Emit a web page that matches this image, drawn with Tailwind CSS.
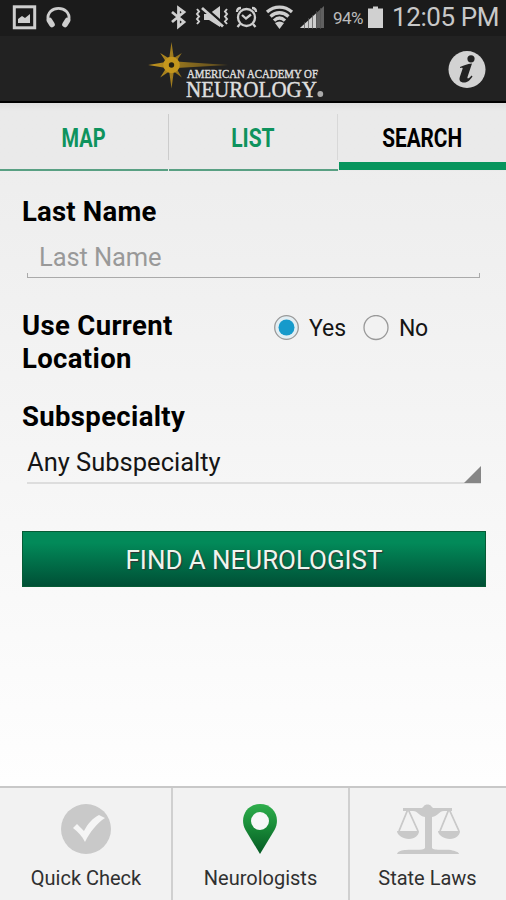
<!DOCTYPE html>
<html lang="en">
<head>
<meta charset="utf-8">
<title>American Academy of Neurology</title>
<script src="https://cdn.jsdelivr.net/npm/@tailwindcss/browser@4"></script>
</head>
<body class="w-[506px] h-[900px] overflow-hidden font-[Roboto,sans-serif] text-black">
<div class="flex flex-col w-[506px] h-[900px] bg-linear-to-b from-[#e9e9e9] to-[#fefefe] to-[87%]">
  <!-- Status bar -->
  <div class="h-9 shrink-0 bg-[#1b1b1b] flex">
    <svg class="w-[330px] h-9 shrink-0" viewBox="0 0 330 36" fill="none" stroke="#cecece">
      <rect x="14.300" y="6.800" width="20.400" height="21" stroke-width="3"/>
      <path d="M18 23v-4l4-3 3 2 5-4v9z" fill="#cecece" stroke="none"/>
      <path d="M48 20c-2-15.500 23-15.500 21 0" stroke-width="2.800"/>
      <path d="M49.500 20.500l2.500 4M67.500 20.500l-2.500 4" stroke-width="5.600" stroke-linecap="round"/>
      <path d="M172 12l12 10-5.500 4.500V8l5.500 4-12 10" stroke-width="2.800"/>
      <path d="M204 14h5l11-8v21l-11-7h-5z" fill="#cecece" stroke="none"/>
      <path d="M203 6l22 19" stroke="#1b1b1b" stroke-width="2.500"/>
      <path d="M202 8l21 18.500" stroke-width="2.800"/>
      <path d="M197 9l2 2.500-2 2.500 2 2.500-2 2.500 2 2.500-2 2.500M227 9l-2 2.500 2 2.500-2 2.500 2 2.500-2 2.500 2 2.500" stroke-width="2"/>
      <circle cx="246.500" cy="17.500" r="8.500" stroke-width="2.300"/>
      <path d="M242 15l4 3.500 5-4M240 24l-2.500 3M253 24l2.500 3M237 12c0-3 2-4 4-4M256 12c0-3-2-4-4-4" stroke-width="2.300"/>
      <path d="M267 12c7.500-6.500 17.500-6.500 25 0M270.500 16.500c5.500-5 12.500-5 18 0M274 20.700c3.500-3.500 7.500-3.500 11 0" stroke-width="3.300"/>
      <path d="M275 23c3-2 6-2 9 0l-4.500 6z" fill="#cecece" stroke="none"/>
      <path d="M300 28L324 6v22z" fill="#606060" stroke="none"/>
      <path d="M300 28L316 13.500V28z" fill="#cecece" stroke="none"/>
      <path d="M304.500 22v7M308.500 18v11M312.500 15v14M316.500 11v18M320.500 8v21" stroke="#505050" stroke-width=".7"/>
    </svg>
    <span class="w-[37px] shrink-0 text-[17px] leading-9 pl-[3px] text-[#bcbcbc] tracking-[-.6px] whitespace-nowrap">94%</span>
    <svg class="w-5 h-9 shrink-0" viewBox="0 0 20 36"><path d="M1 8.500h5V6.500h5v2h5V28H1z" fill="#d0d0d0"/></svg>
    <span class="pl-[5px] text-[26px] leading-[35px] text-[#c8c8c8] whitespace-nowrap tracking-[-.4px]">12:05 PM</span>
  </div>
  <!-- Brand header -->
  <header class="h-[67px] shrink-0 bg-[#222] border-b-2 border-black flex items-start justify-between">
    <svg class="w-[190px] h-[65px] ml-[145px]" viewBox="145 36 190 65">
      <defs>
        <linearGradient id="ray"><stop stop-color="#c5971e"/><stop offset="1" stop-color="#7e621c" stop-opacity=".6"/></linearGradient>
      </defs>
      <path d="M171.500 42l2.300 16 8-5-5.500 8.500 51.700 3.500-51.700 3 5.500 9.500-8-6-2.300 17-2.300-17-9 6 6-9.500-18-3 18-3-6-9 9 5.500z" fill="url(#ray)"/>
      <circle cx="171.500" cy="65" r="8.300" fill="#c4961d"/>
      <circle cx="171.500" cy="65" r="2.700" fill="#242013"/>
      <g font-family="Liberation Serif, serif" fill="#dedede" stroke="#dedede">
        <text x="187" y="78.300" font-size="11.500" stroke-width=".4" textLength="131" lengthAdjust="spacingAndGlyphs">AMERICAN ACADEMY OF</text>
        <text x="186" y="96.600" font-size="23" stroke-width=".45" textLength="131" lengthAdjust="spacingAndGlyphs">NEUROLOGY</text>
      </g>
      <circle cx="320.300" cy="94" r="2.900" fill="#aaa"/>
    </svg>
    <svg class="w-10 h-10 mt-[13px] mr-[19px]" viewBox="0 0 40 40">
      <circle cx="20" cy="20.500" r="18.500" fill="#d2d2d2"/>
      <circle cx="24" cy="9.800" r="3.600" fill="#222"/>
      <path d="M13 18c3-1.500 7-3 12-3.500l-4.500 13.500c-.5 2.500 1.500 1.500 4-1.500l1 1c-3 4.500-5.500 6-8.500 6-3.800 0-5.200-2.200-4.200-5.500l2.700-8c.5-1.500-.5-1.500-2.500-1z" fill="#222"/>
    </svg>
  </header>
  <!-- Tabs -->
  <nav class="h-[68px] shrink-0 flex gap-[1px] text-[25px] leading-[72px] font-bold text-center text-[#0e935d] bg-linear-to-b from-[#dedede] to-[#eaeaea] to-[12%]">
    <div class="w-[168px] h-[67.500px] border-b-2 border-[#59a083]"><span class="inline-block scale-x-[.8] -ml-px">MAP</span></div>
    <div class="w-[169px] h-[67.500px] border-b-2 border-[#59a083] flex"><i class="w-px h-[46px] mt-[11px] -ml-px bg-[#ccc]"></i><span class="flex-1"><span class="inline-block scale-x-[.84]">LIST</span></span><i class="w-px h-[46px] mt-[11px] bg-[#d8d8d8]"></i></div>
    <div class="w-[167px] h-[67px] border-b-[8px] border-[#07955d] text-black"><span class="inline-block scale-x-[.83]">SEARCH</span></div>
  </nav>
  <!-- Search form -->
  <main class="flex-1 pt-6 pl-[22px] pr-5 flex flex-col">
    <label class="text-[27.500px] leading-[33px] font-bold tracking-[.2px]">Last Name</label>
    <div class="ml-[5px] mr-[6px] mt-[6px] h-11 text-[25.500px] pl-[12px] text-[#999] flex flex-col justify-end">
      <span class="h-[39px] leading-[46px] tracking-[-.1px]">Last Name</span>
      <span class="-ml-[12px] h-[5px] border border-t-0 border-[#aaa]"></span>
    </div>
    <div class="mt-[31px] flex">
      <div class="w-[252px] text-[27.500px] leading-[33px] font-bold tracking-[.35px]">Use Current<br>Location</div>
      <div class="flex items-start h-9 text-[23px] leading-9 text-[#151515]">
        <svg class="w-[26px] h-[26px] mt-[6px]" viewBox="0 0 26 26"><circle cx="12.500" cy="12.500" r="11.800" fill="#e2eef3" stroke="#999" stroke-width="1.300"/><circle cx="12.500" cy="12.500" r="8" fill="#169acb"/></svg>
        <span class="ml-[9px] w-[53px] mt-[2px]">Yes</span>
        <svg class="w-[26px] h-[26px] mt-[6px] ml-px" viewBox="0 0 26 26"><circle cx="13" cy="12.500" r="12" fill="#f2f2f2" stroke="#999" stroke-width="1.300"/></svg>
        <span class="ml-[10px] mt-[2px] tracking-[-.3px]">No</span>
      </div>
    </div>
    <label class="mt-[25px] text-[27.500px] leading-[33px] font-bold tracking-[.35px]">Subspecialty</label>
    <div class="mx-[5px] mt-px h-[50px] border-b-2 border-[#ddd] text-[25.500px] leading-[60px] text-[#151515] flex justify-between items-end">
      <span class="h-[50px]">Any Subspecialty</span>
      <svg class="w-[17px] h-[17px] -mb-px" viewBox="0 0 17 17"><path d="M0 17L17 0v17z" fill="#868686"/></svg>
    </div>
    <button class="mt-[47px] h-14 w-[464px] border border-[#075b35] bg-linear-to-b from-[#028a59] from-[20%] to-[#005036] text-[#eef5ee] text-[26px] leading-[56px] tracking-[-.05px] [text-shadow:1px_1px_1px_#333]">FIND A NEUROLOGIST</button>
  </main>
  <!-- Bottom navigation -->
  <footer class="h-[114px] shrink-0 border-t-2 border-[#c8c8c8] bg-[#f2f2f2] flex text-[20px] leading-[30px] text-[#303030] text-center">
    <div class="w-[173px] border-r-2 border-[#d0d0d0] flex flex-col items-center pt-[15px]">
      <svg class="w-[52px] h-[52px]" viewBox="0 0 52 52"><circle cx="26" cy="26" r="25" fill="#c9c9c9"/><path d="M13 25l4-4 7 7c4-8 9-13 15-16l6 3C37 20 30 29 25 39 22 33 18 29 13 25z" fill="#f5f5f5"/></svg>
      <span class="mt-[8px] ml-px">Quick Check</span>
    </div>
    <div class="w-[177px] border-r-2 border-[#d0d0d0] flex flex-col items-center pt-[15px]">
      <svg class="w-[36px] h-[52px] -ml-[2px]" viewBox="0 0 36 52"><defs><linearGradient id="pin" x2="0" y2="1"><stop stop-color="#2fae4c"/><stop offset=".45" stop-color="#198b38"/><stop offset="1" stop-color="#055a24"/></linearGradient></defs><path d="M18 51L3.500 27C-3 15 4 1 18 1s21 14 14.500 26z" fill="url(#pin)"/><circle cx="18" cy="18" r="9" fill="#f7f7f7"/></svg>
      <span class="mt-[8px]">Neurologists</span>
    </div>
    <div class="flex-1 flex flex-col items-center pt-[15px]">
      <svg class="w-[64px] h-[52px] -ml-px" viewBox="0 0 64 52" fill="#c9c9c9"><path d="M7 5h19l2-2c1-2 6-2 7 0l2 2h19v3h-8c-5 0-6 5-12 6v31c2 3 14 1 19 2 4 1 8 2 8 4H1c1-3 5-4 9-4 6-1 17 1 19-2V14c-6-1-7-6-12-6H7z"/><path d="M1 28h22c0 4-4 8-10 8S1 32 1 28zM42 28h22c0 4-4 8-10 8s-12-4-12-8z"/><path d="M12 6L3 28M12 6l10 22M53 6l-9 22M53 6l10 22" fill="none" stroke="#c9c9c9" stroke-width="1.800"/></svg>
      <span class="mt-[8px] -ml-px">State Laws</span>
    </div>
  </footer>
</div>
</body>
</html>
